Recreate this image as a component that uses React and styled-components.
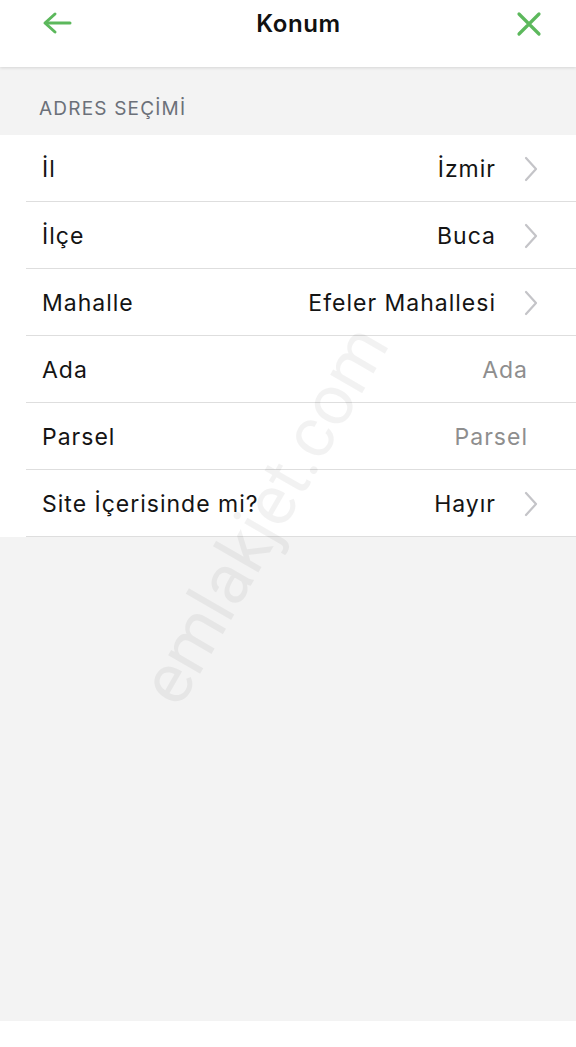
import React from 'react'
import styled, { createGlobalStyle } from 'styled-components'

const GlobalStyle = createGlobalStyle`
  html, body {
    margin: 0;
    padding: 0;
    background: #fff;
  }
  body {
    font-family: "Inter", "Liberation Sans", Arial, sans-serif;
    -webkit-font-smoothing: antialiased;
  }
`

const green = '#5cb85c'

const Screen = styled.div`
  position: relative;
  width: 576px;
  height: 1047px;
  display: flex;
  flex-direction: column;
  overflow: hidden;
  background: #fff;
`

const Header = styled.header`
  position: relative;
  z-index: 2;
  height: 67px;
  display: grid;
  grid-template-columns: 90px 1fr 90px;
  align-items: start;
  background: #fff;
  box-shadow: 0 1px 3px rgba(0, 0, 0, 0.12);
`

const IconButton = styled.button`
  display: flex;
  justify-content: ${p => (p.right ? 'flex-end' : 'flex-start')};
  padding: ${p => (p.right ? '11px 34px 0 0' : '11px 0 0 42px')};
  border: none;
  background: none;
  cursor: pointer;
`

const Title = styled.h1`
  margin: 0;
  padding-top: 9px;
  padding-left: 21px;
  text-align: center;
  font-size: 24px;
  font-weight: 600;
  letter-spacing: 0.6px;
  color: #111;
`

const Body = styled.main`
  flex: 1;
  display: flex;
  flex-direction: column;
  background: #f3f3f3;
`

const SectionLabel = styled.div`
  height: 68px;
  display: flex;
  align-items: center;
  padding: 14px 0 0 39px;
  box-sizing: border-box;
  font-size: 19px;
  letter-spacing: 1.2px;
  color: #6b7079;
`

const List = styled.ul`
  margin: 0;
  padding: 0;
  list-style: none;
  background: #fff;
`

const Row = styled.li`
  height: 65px;
  margin-left: 26px;
  display: flex;
  align-items: center;
  justify-content: space-between;
  border-bottom: 1px solid #dedede;
  padding: 1px ${p => (p.chevron ? '38px' : '48px')} 0 16px;
  box-sizing: content-box;
  font-size: 23px;
  letter-spacing: 1px;
  color: #141414;
`

const Value = styled.span`
  display: flex;
  align-items: center;
  gap: 28px;
  color: ${p => (p.placeholder ? '#8e8e8e' : '#141414')};
`

const Footer = styled.div`
  height: 26px;
  background: #fff;
`

const Watermark = styled.div`
  position: absolute;
  left: 264px;
  top: 515px;
  transform: translate(-50%, -50%) rotate(-60deg);
  font-family: "Roboto", "Liberation Sans", sans-serif;
  font-size: 70px;
  color: rgba(0, 0, 0, 0.05);
  white-space: nowrap;
  pointer-events: none;
  z-index: 3;
`

const BackIcon = () => (
  <svg width="30" height="24" viewBox="0 0 30 24" fill="none" stroke={green} strokeWidth="3" strokeLinecap="round" strokeLinejoin="round">
    <path d="M28 12H4" />
    <path d="M13 3L3 12l10 9" />
  </svg>
)

const CloseIcon = () => (
  <svg width="26" height="26" viewBox="0 0 26 26" fill="none" stroke={green} strokeWidth="3.2" strokeLinecap="round">
    <path d="M3 3l20 20M23 3L3 23" />
  </svg>
)

const Chevron = () => (
  <svg width="14" height="26" viewBox="0 0 14 26" fill="none" stroke="#c4c4c8" strokeWidth="2.2" strokeLinecap="round" strokeLinejoin="round">
    <path d="M2 2l10 11L2 24" />
  </svg>
)

const rows = [
  { label: 'İl', value: 'İzmir', chevron: true },
  { label: 'İlçe', value: 'Buca', chevron: true },
  { label: 'Mahalle', value: 'Efeler Mahallesi', chevron: true },
  { label: 'Ada', value: 'Ada', placeholder: true },
  { label: 'Parsel', value: 'Parsel', placeholder: true },
  { label: 'Site İçerisinde mi?', value: 'Hayır', chevron: true },
]

const App = () => (
  <Screen>
    <GlobalStyle />
    <Header>
      <IconButton aria-label="Geri">
        <BackIcon />
      </IconButton>
      <Title>Konum</Title>
      <IconButton right aria-label="Kapat">
        <CloseIcon />
      </IconButton>
    </Header>
    <Body>
      <SectionLabel>ADRES SEÇİMİ</SectionLabel>
      <List>
        {rows.map(r => (
          <Row key={r.label} chevron={r.chevron}>
            <span>{r.label}</span>
            <Value placeholder={r.placeholder}>
              {r.value}
              {r.chevron && <Chevron />}
            </Value>
          </Row>
        ))}
      </List>
    </Body>
    <Footer />
    <Watermark>emlakjet.com</Watermark>
  </Screen>
)

export default App
